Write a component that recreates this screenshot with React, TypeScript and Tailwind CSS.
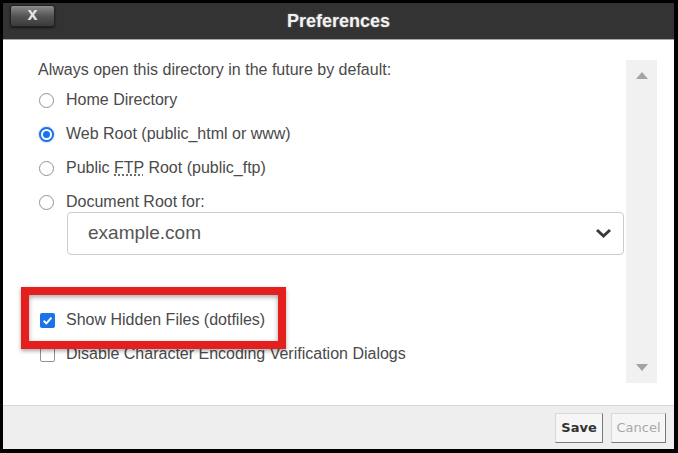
import React from 'react';

const font = { fontFamily: '"Liberation Sans", Arial, sans-serif' };

const Radio: React.FC<{ checked?: boolean }> = ({ checked }) =>
  checked ? (
    <span className="w-[15px] h-[15px] rounded-full border-2 border-[#1a73e8] bg-white flex items-center justify-center shrink-0 shadow-[0_0_2px_rgba(26,115,232,0.6)]">
      <span className="w-[7px] h-[7px] rounded-full bg-[#1a73e8]" />
    </span>
  ) : (
    <span className="w-[15px] h-[15px] rounded-full border border-[#929292] bg-white shrink-0" />
  );

const Checkbox: React.FC<{ checked?: boolean }> = ({ checked }) =>
  checked ? (
    <span className="w-[15px] h-[15px] rounded-[2px] bg-[#1a73e8] flex items-center justify-center shrink-0">
      <svg width="11" height="11" viewBox="0 0 10 10">
        <polyline points="1.5,5.2 4,7.6 8.6,2.4" fill="none" stroke="#fff" strokeWidth="1.8" />
      </svg>
    </span>
  ) : (
    <span className="w-[15px] h-[15px] rounded-[2px] border border-[#929292] bg-white shrink-0" />
  );

export default function App() {
  const options = [
    { label: 'Home Directory', checked: false },
    { label: 'Web Root (public_html or www)', checked: true },
  ];

  return (
    <div className="w-[678px] h-[453px] bg-black pt-[3px] pl-[3px] pr-[4px] pb-[4px] flex flex-col" style={font}>
      {/* title bar */}
      <div className="h-[36px] bg-[#333333] border-b border-[#a8a8a8] box-content relative flex items-center justify-center shrink-0">
        <button className="absolute left-[7px] top-[2px] w-[45px] h-[22px] rounded-[3px] border border-[#222] bg-gradient-to-b from-[#8c8c8c] via-[#555] to-[#3a3a3a] flex items-center justify-center shadow-[0_1px_2px_rgba(0,0,0,0.6)]">
          <span className="text-[#e6e6e6] text-[18px] font-bold leading-none -mt-[4px]">x</span>
        </button>
        <span className="text-[#f2f2f2] text-[18px] font-bold [text-shadow:0_0_2px_rgba(255,255,255,0.35)]">Preferences</span>
      </div>

      {/* body */}
      <div className="h-[365px] bg-white flex relative shrink-0">
        <div className="flex-1 pl-[35px] pt-[20px] text-[16px] text-[#4a4a4a]">
          <div className="leading-[20px]">Always open this directory in the future by default:</div>
          <div className="mt-[3px]">
            {options.map((o) => (
              <div key={o.label} className="h-[34px] flex items-center gap-[12px] pl-[1px]">
                <Radio checked={o.checked} />
                <span>{o.label}</span>
              </div>
            ))}
            <div className="h-[34px] flex items-center gap-[12px] pl-[1px]">
              <Radio />
              <span>
                Public <abbr className="underline decoration-dotted underline-offset-2">FTP</abbr> Root (public_ftp)
              </span>
            </div>
            <div className="h-[34px] flex items-center gap-[12px] pl-[1px]">
              <Radio />
              <span>Document Root for:</span>
            </div>
          </div>
          <div className="-mt-[7px] ml-[29px] mr-[2px] h-[43px] border border-[#cccccc] rounded-[4px] flex items-center justify-between pl-[20px] pr-[11px]">
            <span className="text-[19px] text-[#555]">example.com</span>
            <svg width="17" height="11" viewBox="0 0 17 11">
              <polyline points="2,2 8.5,8 15,2" fill="none" stroke="#3a3a3a" strokeWidth="3" />
            </svg>
          </div>
          <div className="mt-[48px] h-[34px] flex items-center gap-[11px] pl-[2px]">
            <Checkbox checked />
            <span>Show Hidden Files (dotfiles)</span>
          </div>
          <div className="h-[34px] flex items-center gap-[11px] pl-[2px]">
            <Checkbox />
            <span>Disable Character Encoding Verification Dialogs</span>
          </div>
        </div>

        {/* scrollbar */}
        <div className="w-[31px] mt-[20px] mb-[22px] mr-[17px] bg-[#f1f1f1] flex flex-col items-center justify-between py-[12px]">
          <svg width="12" height="7" viewBox="0 0 12 7">
            <polygon points="6,0 12,7 0,7" fill="#a3a3a3" />
          </svg>
          <svg width="12" height="7" viewBox="0 0 12 7">
            <polygon points="0,0 12,0 6,7" fill="#a3a3a3" />
          </svg>
        </div>

        {/* highlight annotation */}
        <div className="absolute left-[18px] top-[247px] w-[265px] h-[62px] border-[8px] border-[#e3201e] shadow-[0_2px_4px_rgba(0,0,0,0.35),inset_0_2px_5px_rgba(0,0,0,0.35)] pointer-events-none" />
      </div>

      {/* footer */}
      <div className="flex-1 bg-[#eeeeee] border-t border-[#d6d6d6] flex items-center justify-end gap-[8px] pr-[8px] pt-[1px]" style={{ fontFamily: '"DejaVu Sans", Verdana, sans-serif' }}>
        <button className="w-[48px] h-[30px] bg-[#f6f6f6] border border-t-[#d8d8d8] border-l-[#d8d8d8] border-r-[#7a7a7a] border-b-[#7a7a7a] text-[13px] font-bold text-[#333]">
          Save
        </button>
        <button className="w-[55px] h-[30px] bg-[#f6f6f6] border border-t-[#d8d8d8] border-l-[#d8d8d8] border-r-[#7a7a7a] border-b-[#7a7a7a] text-[13px] text-[#a8a8a8]">
          Cancel
        </button>
      </div>
    </div>
  );
}
